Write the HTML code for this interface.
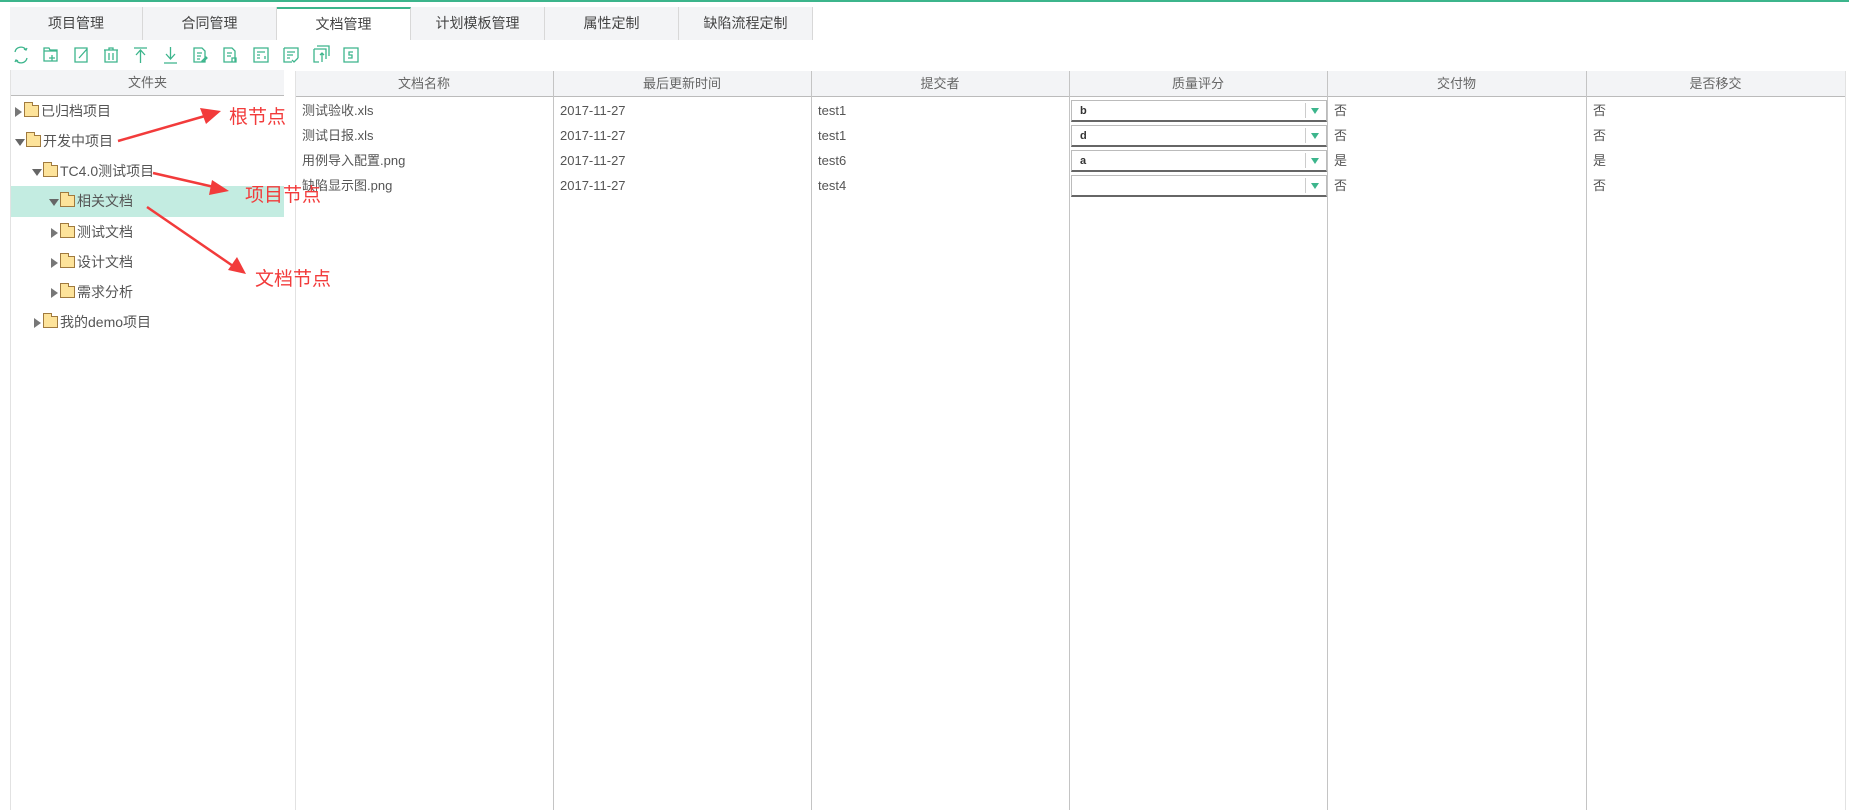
<!DOCTYPE html>
<html><head><meta charset="utf-8"><style>
*{margin:0;padding:0;box-sizing:border-box}
body{width:1849px;height:810px;background:#fff;position:relative;overflow:hidden;font-family:"Liberation Sans","Noto Sans CJK SC",sans-serif;color:#555}
.a{position:absolute}
.tab{position:absolute;top:7px;height:33px;background:#f3f4f6;border-right:1px solid #d8d8d8;font-size:14px;color:#444;text-align:center;line-height:33px}
.tab.on{background:#fff;border-top:2px solid #3cb58c;line-height:31px}
.ic{position:absolute;top:47px;width:16px;height:16px}
.hdr{position:absolute;top:71px;height:26px;background:#f3f4f6;border-bottom:1px solid #bbb;font-size:13px;text-align:center;line-height:26px;color:#666}
.vl{position:absolute;top:71px;width:1px;height:739px;background:#c4c4c4}
.tr{position:absolute;font-size:14px;color:#555;height:30px;line-height:30px;white-space:nowrap}
.arr{display:inline-block;width:0;height:0;vertical-align:middle}
.ar{border-top:5px solid transparent;border-bottom:5px solid transparent;border-left:7px solid #777;margin-right:2px}
.ad{border-left:5px solid transparent;border-right:5px solid transparent;border-top:7px solid #666;margin-right:1px}
.fd{display:inline-block;width:15px;height:12px;background:#fde39a;border:1px solid #a07a3e;vertical-align:middle;margin-right:2px;position:relative;top:-1px}
.fd:before{content:"";position:absolute;left:-1px;top:-4px;width:7px;height:3px;background:#fde39a;border:1px solid #a07a3e;border-bottom:none}
.c{position:absolute;font-size:13px;color:#555;height:25px;line-height:25px}
.dd{position:absolute;left:1071px;width:256px;height:22px;border:1px solid #bbb;border-bottom:2px solid #666;font-size:11px;font-weight:bold;color:#333;line-height:20px;padding-left:8px}
.dd:after{content:"";position:absolute;right:7px;top:7px;border-left:4px solid transparent;border-right:4px solid transparent;border-top:6px solid #3cb58c}
.dd:before{content:"";position:absolute;right:20px;top:2px;width:1px;height:15px;background:#ccc}
.red{position:absolute;color:#f23b3b;font-size:19px}
</style></head><body>
<div class="a" style="left:0;top:0;width:1849px;height:2px;background:#3cb58c"></div>
<div class="tab" style="left:10px;width:133px">项目管理</div>
<div class="tab" style="left:143px;width:134px">合同管理</div>
<div class="tab on" style="left:277px;width:134px">文档管理</div>
<div class="tab" style="left:411px;width:134px">计划模板管理</div>
<div class="tab" style="left:545px;width:134px">属性定制</div>
<div class="tab" style="left:679px;width:134px">缺陷流程定制</div>

<svg class="a" style="left:0;top:0" width="380" height="70" fill="none" stroke="#3cb58c" stroke-width="1.3">
<path d="M15 52a6 6 0 0 1 11-2M27 58a6 6 0 0 1-11 2M24 49l2 1 1-2M18 61l-2-1-1 2"/>
<path d="M44 48h5l1 2h7v11h-13zM44 51h13M52 55v6M49 58h6"/>
<path d="M75 48h12v14h-12zM79 58l8-9"/>
<path d="M104 50h14M109 50v-2h4v2M105 50v12h12v-12M109 53v7M113 53v7"/>
<path d="M134 48h13M140.5 63v-13M136 55l4.5-5 4.5 5"/>
<path d="M164 63h13M170.5 47v12M166 54l4.5 5 4.5-5"/>
<path d="M194 48h8l3 3v11h-11zM197 53h5M197 56h4M197 59h3M202 61l4-4 1 1-4 4z"/>
<path d="M224 48h8l3 3v11h-11zM227 53h5M227 56h4M232 58h4v4h-4z"/>
<path d="M254 48h14v14h-14zM257 52h8M257 55h3M257 58h3M265 56v3"/>
<path d="M284 48h14v10M284 48v14h8M287 52h8M287 55h6M287 58h3M292 60l2 2 4-4"/>
<path d="M314 49h12v10M314 49v13h5M317 46h12v10M322 53v9M320 55l2-2 2 2"/>
<path d="M344 48h14v14h-14zM353 52h-4v3h3v3h-4"/>
</svg>

<div class="a" style="left:10px;top:70px;width:1px;height:740px;background:#e2e2e2"></div>
<div class="hdr" style="left:11px;width:273px;top:70px">文件夹</div>
<div class="a" style="left:11px;top:186px;width:273px;height:31px;background:#c3ece1"></div>
<div class="tr" style="left:15px;top:96px"><span class="arr ar"></span><span class="fd"></span>已归档项目</div>
<div class="tr" style="left:15px;top:126px"><span class="arr ad"></span><span class="fd"></span>开发中项目</div>
<div class="tr" style="left:32px;top:156px"><span class="arr ad"></span><span class="fd"></span>TC4.0测试项目</div>
<div class="tr" style="left:49px;top:186px"><span class="arr ad"></span><span class="fd"></span>相关文档</div>
<div class="tr" style="left:51px;top:217px"><span class="arr ar"></span><span class="fd"></span>测试文档</div>
<div class="tr" style="left:51px;top:247px"><span class="arr ar"></span><span class="fd"></span>设计文档</div>
<div class="tr" style="left:51px;top:277px"><span class="arr ar"></span><span class="fd"></span>需求分析</div>
<div class="tr" style="left:34px;top:307px"><span class="arr ar"></span><span class="fd"></span>我的demo项目</div>

<div class="hdr" style="left:295px;width:258px">文档名称</div>
<div class="hdr" style="left:553px;width:258px">最后更新时间</div>
<div class="hdr" style="left:811px;width:258px">提交者</div>
<div class="hdr" style="left:1069px;width:258px">质量评分</div>
<div class="hdr" style="left:1327px;width:259px">交付物</div>
<div class="hdr" style="left:1586px;width:259px">是否移交</div>
<div class="vl" style="left:295px;background:#e2e2e2"></div>
<div class="vl" style="left:553px"></div>
<div class="vl" style="left:811px"></div>
<div class="vl" style="left:1069px"></div>
<div class="vl" style="left:1327px"></div>
<div class="vl" style="left:1586px"></div>
<div class="vl" style="left:1845px;background:#e2e2e2"></div>

<div class="c" style="left:302px;top:98px">测试验收.xls</div>
<div class="c" style="left:302px;top:123px">测试日报.xls</div>
<div class="c" style="left:302px;top:148px">用例导入配置.png</div>
<div class="c" style="left:302px;top:173px">缺陷显示图.png</div>
<div class="c" style="left:560px;top:98px">2017-11-27</div>
<div class="c" style="left:560px;top:123px">2017-11-27</div>
<div class="c" style="left:560px;top:148px">2017-11-27</div>
<div class="c" style="left:560px;top:173px">2017-11-27</div>
<div class="c" style="left:818px;top:98px">test1</div>
<div class="c" style="left:818px;top:123px">test1</div>
<div class="c" style="left:818px;top:148px">test6</div>
<div class="c" style="left:818px;top:173px">test4</div>
<div class="dd" style="top:100px">b</div>
<div class="dd" style="top:125px">d</div>
<div class="dd" style="top:150px">a</div>
<div class="dd" style="top:175px"></div>
<div class="c" style="left:1334px;top:98px">否</div>
<div class="c" style="left:1334px;top:123px">否</div>
<div class="c" style="left:1334px;top:148px">是</div>
<div class="c" style="left:1334px;top:173px">否</div>
<div class="c" style="left:1593px;top:98px">否</div>
<div class="c" style="left:1593px;top:123px">否</div>
<div class="c" style="left:1593px;top:148px">是</div>
<div class="c" style="left:1593px;top:173px">否</div>

<svg class="a" style="left:0;top:0" width="400" height="320">
<path d="M118 141L205 116" stroke="#f23b3b" stroke-width="2.5"/>
<path d="M221 111L200 108L206 124Z" fill="#f23b3b"/>
<path d="M153 173L214 187" stroke="#f23b3b" stroke-width="2.5"/>
<path d="M229 191L212 180L209 195Z" fill="#f23b3b"/>
<path d="M147 207L233 266" stroke="#f23b3b" stroke-width="2.5"/>
<path d="M246 274L237 257L228 270Z" fill="#f23b3b"/>
</svg>
<div class="red" style="left:229px;top:102px">根节点</div>
<div class="red" style="left:245px;top:180px">项目节点</div>
<div class="red" style="left:255px;top:264px">文档节点</div>
</body></html>
